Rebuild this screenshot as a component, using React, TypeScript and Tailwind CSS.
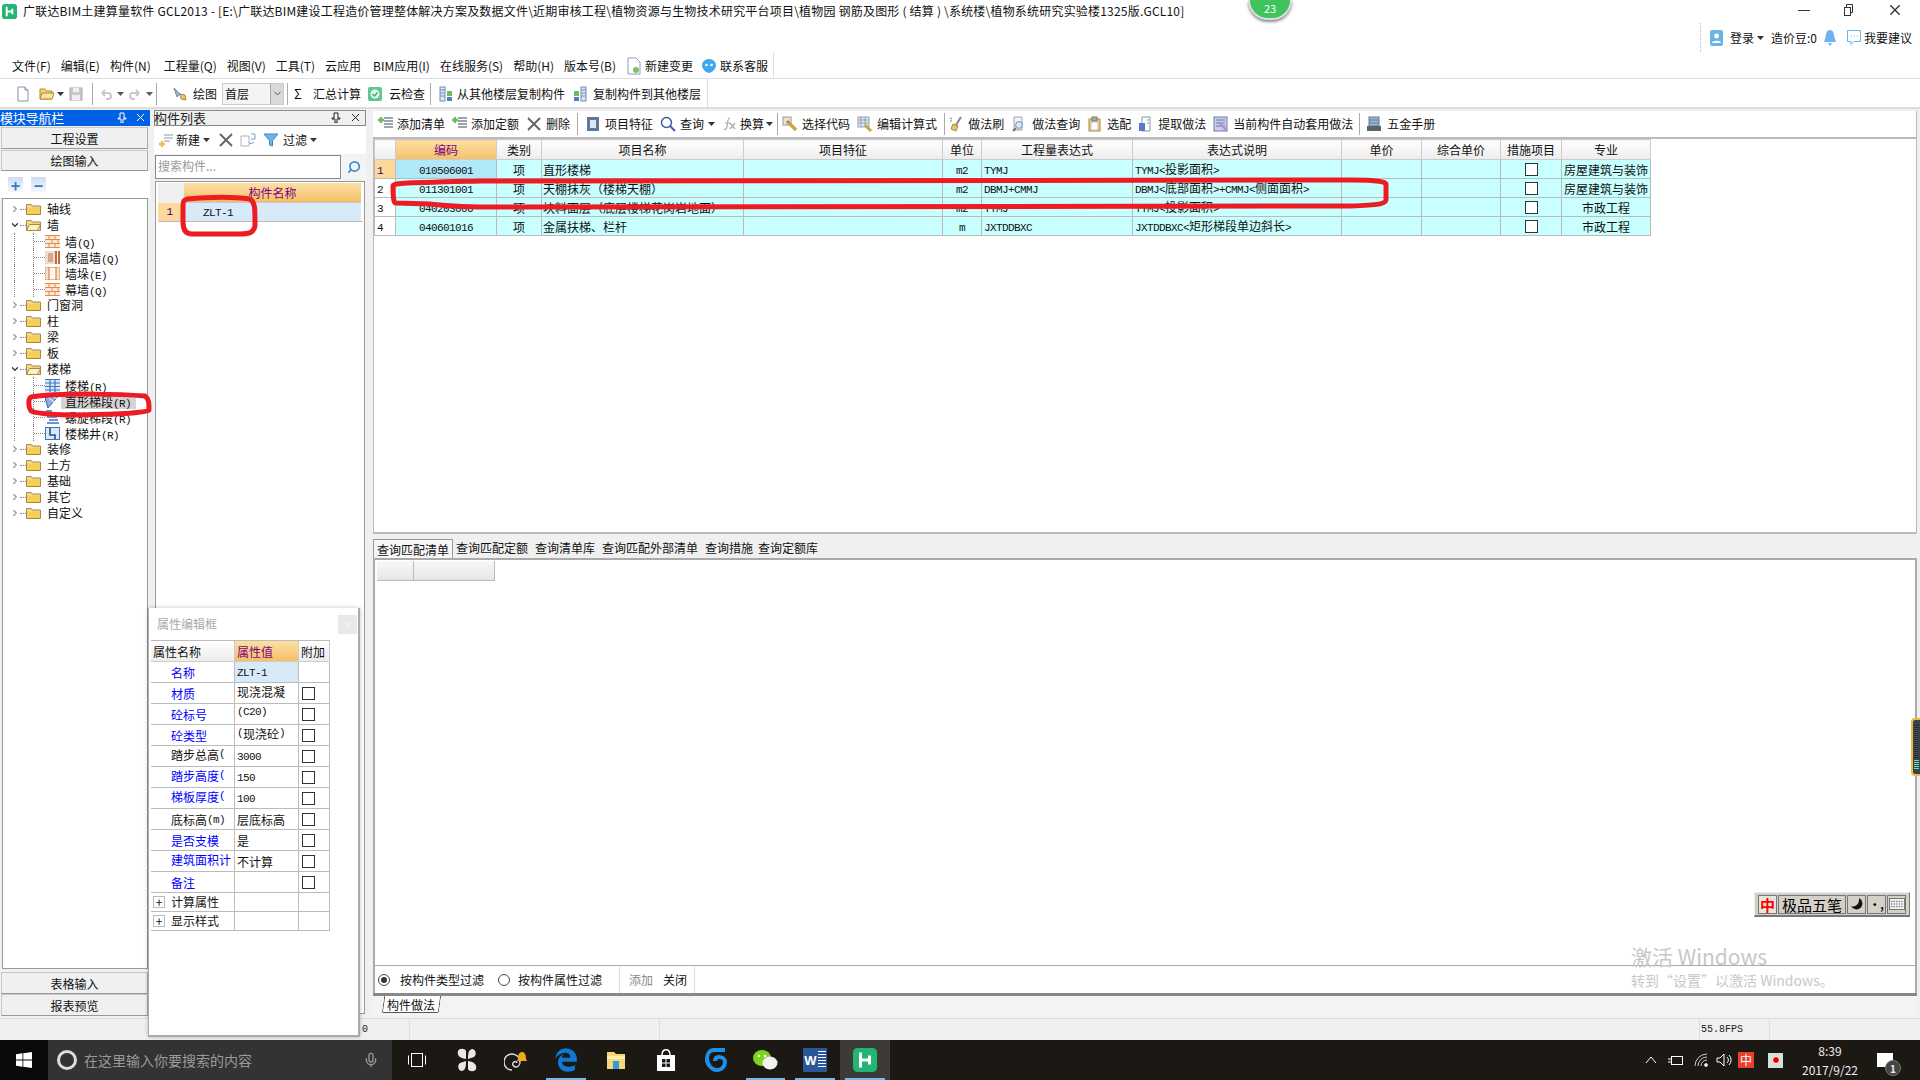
import type { ReactNode } from "react";
import { FaEdgeLegacy } from "react-icons/fa";
import { LuChevronDown, LuChevronRight, LuMic, LuSearch } from "react-icons/lu";

// splits ascii runs out so latin renders like the app's narrow monospaced font
const Sim = ({ text }: { text: string }) => (
  <>
    {text.split(/([\x00-\x7f]+)/).map((part, i) =>
      /^[\x00-\x7f]+$/.test(part) ? (
        <span key={i} className="font-['Liberation_Mono','Noto_Sans_CJK_SC',monospace] text-[11px] tracking-[-0.6px]">
          {part}
        </span>
      ) : (
        <span key={i}>{part}</span>
      )
    )}
  </>
);

const AppLogo = ({ size = 16 }: { size?: number }) => (
  <svg width={size} height={size} viewBox="0 0 16 16">
    <rect width="16" height="16" rx="3" fill="#22b573" />
    <path d="M5 3v10M5 8h6M11 5v6" stroke="#fff" strokeWidth="2" fill="none" />
  </svg>
);

const Arrow = () => (
  <svg width="7" height="4" viewBox="0 0 7 4" className="shrink-0">
    <path d="M0 0h7L3.5 4z" fill="#333" />
  </svg>
);

const Pin = () => (
  <svg width="10" height="11" viewBox="0 0 10 11">
    <path d="M3 1h4v5h2v1H6v4H4V7H1V6h2z" fill="none" stroke="currentColor" />
  </svg>
);

const Cross = ({ color = "currentColor", size = 9 }: { color?: string; size?: number }) => (
  <svg width={size} height={size} viewBox="0 0 9 9">
    <path d="M1 1l7 7M8 1L1 8" stroke={color} strokeWidth="1" fill="none" />
  </svg>
);

const Sep = () => <span className="block h-[22px] w-px bg-[#aaa] shrink-0" />;

/* toolbar icons */
const Page = () => (
  <svg width="16" height="16" viewBox="0 0 16 16">
    <path d="M3 1h7l3 3v11H3z" fill="#fff" stroke="#8a93a3" />
    <path d="M10 1v3h3" fill="#dde" stroke="#8a93a3" />
  </svg>
);
const OpenFolder = () => (
  <svg width="16" height="16" viewBox="0 0 16 16">
    <path d="M1 3h5l1 2h6v8H1z" fill="#f4d27a" stroke="#b08a33" />
    <path d="M1 13l2-6h12l-2 6z" fill="#fbe49f" stroke="#b08a33" />
  </svg>
);
const Disk = () => (
  <svg width="16" height="16" viewBox="0 0 16 16">
    <rect x="2" y="2" width="12" height="12" fill="#c9c9c9" stroke="#aaa" />
    <rect x="5" y="2" width="6" height="4" fill="#eee" />
    <rect x="4" y="9" width="8" height="5" fill="#eee" />
  </svg>
);
const Undo = ({ flip }: { flip?: boolean }) => (
  <svg width="14" height="14" viewBox="0 0 14 14" className={flip ? "-scale-x-100" : ""}>
    <path d="M3 6l3-3M3 6l3 3M3 6h6a3 3 0 0 1 0 6H7" stroke="#bbb" strokeWidth="2" fill="none" />
  </svg>
);
const Brush = () => (
  <svg width="16" height="16" viewBox="0 0 16 16">
    <path d="M2 2l6 6-3 3z" fill="#9db9dd" stroke="#6a8ab0" />
    <path d="M8 8l5 1 1 5-5-1z" fill="#e6c56a" stroke="#a88a3a" />
  </svg>
);
const CloudCheck = () => (
  <svg width="16" height="16" viewBox="0 0 16 16">
    <rect x="1" y="1" width="14" height="14" rx="2" fill="#5ec98c" />
    <circle cx="8" cy="8" r="4.5" fill="#e9f8ee" />
    <path d="M5.5 8l2 2 3-3.5" stroke="#3ca56b" strokeWidth="1.4" fill="none" />
  </svg>
);
const CopyFloor = ({ flip }: { flip?: boolean }) => (
  <svg width="16" height="16" viewBox="0 0 16 16">
    <rect x={flip ? 9 : 2} y="1" width="5" height="14" fill="#dbe6f3" stroke="#6d8fb8" />
    <path d={flip ? "M9 4h5M9 7h5M9 10h5" : "M2 4h5M2 7h5M2 10h5"} stroke="#6d8fb8" />
    <rect x={flip ? 2 : 9} y="5" width="5" height="5" fill="#6dbb5d" />
    <rect x={flip ? 2 : 9} y="11" width="5" height="4" fill="#4f7fb5" />
  </svg>
);
const AddSheet = ({ tint = "#6dbb5d" }: { tint?: string }) => (
  <svg width="16" height="16" viewBox="0 0 16 16">
    <path d="M6 2h9M6 5h9M6 8h9M6 11h9" stroke="#7a8794" strokeWidth="1.4" />
    <path d="M3 1v6M0 4h6" stroke={tint} strokeWidth="2.4" />
  </svg>
);
const BigX = () => (
  <svg width="16" height="16" viewBox="0 0 16 16">
    <path d="M2 2l12 12M14 2L2 14" stroke="#666" strokeWidth="2" />
  </svg>
);
const Feature = () => (
  <svg width="16" height="16" viewBox="0 0 16 16">
    <rect x="2" y="1" width="12" height="14" fill="#5d7a99" />
    <rect x="5" y="4" width="6" height="8" fill="#dfe7ef" />
  </svg>
);
const Lens = ({ color = "#3d55a5" }: { color?: string }) => (
  <svg width="16" height="16" viewBox="0 0 16 16">
    <circle cx="6.5" cy="6.5" r="5" fill="none" stroke={color} strokeWidth="1.4" />
    <path d="M10 10l5 5" stroke={color} strokeWidth="1.8" />
  </svg>
);
const Fx = () => (
  <svg width="16" height="16" viewBox="0 0 16 16">
    <path d="M8 2C5 2 6 7 5 11c-.4 2-2 3-3 2M3 7h5M8 7l5 6M13 7l-5 6" stroke="#aaa" fill="none" strokeWidth="1.2" />
  </svg>
);
const Pencils = () => (
  <svg width="16" height="16" viewBox="0 0 16 16">
    <rect x="1" y="1" width="8" height="8" fill="#e8e4d8" stroke="#999" />
    <path d="M5 5l9 9" stroke="#c9a34a" strokeWidth="3.4" />
    <path d="M5 5l2 1-1 1z" fill="#c33" />
  </svg>
);
const Sheet = () => (
  <svg width="16" height="16" viewBox="0 0 16 16">
    <rect x="1" y="1" width="11" height="10" fill="#e3eaf2" stroke="#8ea0b5" />
    <path d="M1 4h11M1 7h11M4 1v10M8 1v10" stroke="#8ea0b5" />
    <path d="M8 9l6 6" stroke="#c9a34a" strokeWidth="3" />
  </svg>
);
const SweepBrush = () => (
  <svg width="16" height="16" viewBox="0 0 16 16">
    <path d="M12 1L7 9" stroke="#888" strokeWidth="2" />
    <path d="M4 8l5 2-2 5-5-2z" fill="#e6c56a" stroke="#a88a3a" />
    <path d="M1 2l2 1M1 5h2" stroke="#777" />
  </svg>
);
const DocLens = () => (
  <svg width="16" height="16" viewBox="0 0 16 16">
    <path d="M3 1h8v13H3z" fill="#f2f2f2" stroke="#9aa3ad" />
    <circle cx="8" cy="9" r="3.4" fill="#dbe8f6" stroke="#6d8fb8" />
    <path d="M5 12l-3 3" stroke="#777" strokeWidth="2" />
  </svg>
);
const Clip = () => (
  <svg width="16" height="16" viewBox="0 0 16 16">
    <rect x="2" y="3" width="11" height="12" fill="#f0d48b" stroke="#a8893a" />
    <rect x="5" y="1" width="5" height="4" fill="#aaa" stroke="#777" />
    <rect x="4" y="6" width="7" height="8" fill="#fff" stroke="#bbb" />
  </svg>
);
const Extract = () => (
  <svg width="16" height="16" viewBox="0 0 16 16">
    <path d="M4 1h8v14H4z" fill="#fff" stroke="#8a93a3" />
    <rect x="1" y="7" width="6" height="8" fill="#5a78c8" />
    <path d="M9 4h2M9 7h2" stroke="#8a93a3" />
  </svg>
);
const AutoDo = () => (
  <svg width="16" height="16" viewBox="0 0 16 16">
    <rect x="1" y="1" width="13" height="14" fill="#c6cfe8" stroke="#6a7cb0" />
    <path d="M3 4h9M3 7h9M3 10h9" stroke="#6a7cb0" />
    <path d="M6 6l8 9" stroke="#b58fd0" strokeWidth="2.4" />
  </svg>
);
const Handbook = () => (
  <svg width="16" height="16" viewBox="0 0 16 16">
    <rect x="3" y="1" width="10" height="9" fill="#9fb6d2" stroke="#5d7a99" />
    <path d="M3 4h10M3 7h10" stroke="#5d7a99" />
    <rect x="1" y="10" width="14" height="5" fill="#566" />
  </svg>
);
const NewChange = () => (
  <svg width="16" height="18" viewBox="0 0 16 18">
    <path d="M2 1h8l4 4v12H2z" fill="#fff" stroke="#8aa0c8" />
    <circle cx="10" cy="13" r="3" fill="#7cc36a" />
  </svg>
);
const Service = () => (
  <svg width="16" height="16" viewBox="0 0 16 16">
    <path d="M8 1a7 6.4 0 0 1 7 6.4c0 3-3 6.6-7 7.6-4-1-7-4.600-7-7.600A7 6.400 0 0 1 8 1z" fill="#3fa8ee" />
    <circle cx="5.500" cy="7" r="1.300" fill="#fff" />
    <circle cx="10.500" cy="7" r="1.300" fill="#fff" />
  </svg>
);

const Tool = ({ icon, text, gap = "gap-[3px]", tail }: { icon: ReactNode; text: string; gap?: string; tail?: boolean }) => (
  <div className={`flex items-center shrink-0 ${gap}`}>
    {icon}
    <span className="whitespace-nowrap">{text}</span>
    {tail && <Arrow />}
  </div>
);

const MenuBar = () => (
  <div className="flex h-[27px] shrink-0">
    <div className="flex items-center gap-[10px] w-[774px] pl-[12px] pt-[2px] text-[12px] border-r border-b border-[#ddd] text-[#111]">
      <span>文件(F)</span>
      <span>编辑(E)</span>
      <span>构件(N)</span>
      <span className="ml-[3px]">工程量(Q)</span>
      <span>视图(V)</span>
      <span>工具(T)</span>
      <span>云应用</span>
      <span className="ml-[2px]">BIM应用(I)</span>
      <span>在线服务(S)</span>
      <span>帮助(H)</span>
      <span>版本号(B)</span>
      <Tool icon={<NewChange />} text="新建变更" />
      <span className="-ml-[2px]">
        <Tool icon={<Service />} text="联系客服" />
      </span>
    </div>
    <div className="flex-1 border-b border-[#ddd]" />
  </div>
);

const ToolBar = () => (
  <div className="flex items-center h-[30px] shrink-0 border-b-2 border-[#ddd] text-[12px] text-[#111]">
    <div className="flex items-center w-[708px] h-full border-r border-[#ddd] pl-[15px] pt-[1px]">
      <Page />
      <span className="ml-[8px] flex items-center gap-[2px]">
        <OpenFolder />
        <Arrow />
      </span>
      <span className="ml-[4px]">
        <Disk />
      </span>
      <span className="ml-[8px]">
        <Sep />
      </span>
      <span className="ml-[6px] flex items-center gap-[4px] opacity-80">
        <Undo />
        <Arrow />
      </span>
      <span className="ml-[4px] flex items-center gap-[4px] opacity-80">
        <Undo flip />
        <Arrow />
      </span>
      <span className="ml-[3px] mr-[15px]">
        <Sep />
      </span>
      <Tool icon={<Brush />} text="绘图" gap="gap-[5px]" />
      <div className="flex items-center justify-between ml-[5px] w-[62px] h-[22px] pl-[2px] bg-[#f4f4f4] border border-[#ccc]">
        <span>首层</span>
        <span className="flex items-center justify-center w-[13px] h-full bg-[#d9d9d9] border-l border-[#aaa]">
          <LuChevronDown size={11} color="#444" />
        </span>
      </div>
      <span className="ml-[3px]">
        <Sep />
      </span>
      <span className="ml-[6px] mr-[12px] w-[7px] text-[13px]">Σ</span>
      <span>汇总计算</span>
      <span className="ml-[6px]">
        <Tool icon={<CloudCheck />} text="云检查" gap="gap-[6px]" />
      </span>
      <span className="ml-[5px] mr-[7px]">
        <Sep />
      </span>
      <Tool icon={<CopyFloor />} text="从其他楼层复制构件" />
      <span className="ml-[7px]">
        <Tool icon={<CopyFloor flip />} text="复制构件到其他楼层" gap="gap-[5px]" />
      </span>
    </div>
  </div>
);

const Folder = ({ open }: { open?: boolean }) => (
  <svg width="15" height="12" viewBox="0 0 15 12" className="shrink-0">
    <path d="M.5 1.500h5l1 1.500h8v8.500H.5z" fill="#f5d67e" stroke="#a08a50" />
    {open ? (
      <path d="M.5 11.500l3-6h11l-3 6z" fill="#fdf0bd" stroke="#a08a50" />
    ) : (
      <path d="M1 5h13v6H1z" fill="#f8cf55" />
    )}
  </svg>
);

const Brick = () => (
  <svg width="15" height="13" viewBox="0 0 15 13" className="shrink-0">
    <rect width="15" height="13" fill="#fbeadb" />
    <path d="M0 .5h15M0 4.500h15M0 8.500h15M0 12.500h15M4 .5v4M10 .5v4M7 4.500v4M13 4.500v4M4 8.500v4M10 8.500v4" stroke="#e88a4a" fill="none" />
  </svg>
);
const BrickInsul = () => (
  <svg width="15" height="13" viewBox="0 0 15 13" className="shrink-0">
    <rect width="10" height="13" fill="#eedccd" />
    <rect x="3" y="2" width="5" height="9" fill="#d9a88c" />
    <path d="M11 0v13M14 0v13" stroke="#c4683a" strokeWidth="2" />
  </svg>
);
const Pier = () => (
  <svg width="15" height="13" viewBox="0 0 15 13" className="shrink-0">
    <rect width="15" height="13" fill="#fbe0c8" stroke="#e88a4a" />
    <rect x="4" y="0" width="7" height="13" fill="#fff6ec" stroke="#d0703a" />
  </svg>
);
const Stair = () => (
  <svg width="15" height="13" viewBox="0 0 15 13" className="shrink-0">
    <rect width="15" height="13" fill="#dbe8f8" />
    <path d="M0 .5h15M0 4h15M0 7.500h15M0 11h15M5 0v13M10 0v13" stroke="#3e74c0" strokeWidth="1.200" />
  </svg>
);
const StraightRun = () => (
  <svg width="15" height="14" viewBox="0 0 15 14" className="shrink-0">
    <path d="M0 4l9-4h6L3 14z" fill="#8fb0de" stroke="#2f5fa8" />
    <path d="M4 4l5 4M7 2l5 3" stroke="#fff" />
  </svg>
);
const Spiral = () => (
  <svg width="15" height="14" viewBox="0 0 15 14" className="shrink-0">
    <path d="M1 1h6M4 4h8M2 7h10M4 10h9M2 13h12" stroke="#3e74c0" strokeWidth="1.400" />
  </svg>
);
const Shaft = () => (
  <svg width="15" height="13" viewBox="0 0 15 13" className="shrink-0">
    <rect x=".5" y=".5" width="14" height="12" fill="#dbe8f8" stroke="#3e74c0" />
    <path d="M5 1v7h5V12" stroke="#1f4f98" strokeWidth="1.600" fill="none" />
  </svg>
);

const TopNode = ({ label, open }: { label: string; open?: boolean }) => (
  <div className="flex items-center h-4 pl-[7px]">
    {open ? <LuChevronDown size={10} color="#333" strokeWidth={3} /> : <LuChevronRight size={10} color="#999" strokeWidth={3} />}
    <span className="w-[6px] border-t border-dotted border-[#888]" />
    <Folder open={open} />
    <span className="ml-[6px]">{label}</span>
  </div>
);

const ChildNode = ({ icon, label, selected }: { icon: ReactNode; label: string; selected?: boolean }) => (
  <div className="flex h-4 ml-[11px] border-l border-dotted border-[#888]">
    <div className="flex items-center ml-[18px] border-l border-dotted border-[#888]">
      <span className="w-[11px] border-t border-dotted border-[#888]" />
      {icon}
      <span className={`ml-[1px] pl-[4px] h-[15px] leading-[15px] w-[75px] whitespace-nowrap ${selected ? "bg-[#d3d3d3]" : ""}`}>
        <Sim text={label} />
      </span>
    </div>
  </div>
);

const NavBtn = ({ label, h = "h-[22px]" }: { label: string; h?: string }) => (
  <div className={`flex items-center justify-center pt-px mx-[1px] w-[147px] bg-[#f0f0f0] border border-[#c8c8c8] border-b-[#999] border-r-[#aaa] text-[12px] text-[#111] ${h}`}>
    {label}
  </div>
);

const NavPanel = () => (
  <aside className="flex flex-col w-[150px] shrink-0 h-full">
    <div className="flex items-center h-[16px] mt-[1px] pb-px bg-[#0060e6] text-white text-[13px] leading-none pr-[5px]">
      <span className="tracking-[-0.2px]">模块导航栏</span>
      <span className="ml-auto mr-[9px]">
        <Pin />
      </span>
      <Cross />
    </div>
    <div className="mt-[1px]">
      <NavBtn label="工程设置" />
    </div>
    <div className="mt-px">
      <NavBtn label="绘图输入" h="h-[21px]" />
    </div>
    <div className="flex items-center gap-[8px] h-[27px] pl-[8px] bg-white">
      <span className="flex items-center justify-center w-[15px] h-[15px] bg-linear-to-b from-[#cfdcf0] to-[#f4f7fb] text-[#2f7fd0] text-[16px] font-bold leading-none">+</span>
      <span className="flex items-center justify-center w-[15px] h-[15px] bg-linear-to-b from-[#cfdcf0] to-[#f4f7fb] text-[#2f7fd0] text-[16px] font-bold leading-none">−</span>
    </div>
    <div className="h-[771px] ml-[2px] w-[146px] bg-white border border-[#999] pt-[2px] text-[12px] text-[#111] overflow-hidden">
      <TopNode label="轴线" />
      <TopNode label="墙" open />
      <ChildNode icon={<Brick />} label="墙(Q)" />
      <ChildNode icon={<BrickInsul />} label="保温墙(Q)" />
      <ChildNode icon={<Pier />} label="墙垛(E)" />
      <ChildNode icon={<Brick />} label="幕墙(Q)" />
      <TopNode label="门窗洞" />
      <TopNode label="柱" />
      <TopNode label="梁" />
      <TopNode label="板" />
      <TopNode label="楼梯" open />
      <ChildNode icon={<Stair />} label="楼梯(R)" />
      <ChildNode icon={<StraightRun />} label="直形梯段(R)" selected />
      <ChildNode icon={<Spiral />} label="螺旋梯段(R)" />
      <ChildNode icon={<Shaft />} label="楼梯井(R)" />
      <TopNode label="装修" />
      <TopNode label="土方" />
      <TopNode label="基础" />
      <TopNode label="其它" />
      <TopNode label="自定义" />
    </div>
    <div className="mt-[3px]">
      <NavBtn label="表格输入" />
    </div>
    <div className="mt-[0px]">
      <NavBtn label="报表预览" />
    </div>
  </aside>
);

const ComponentPanel = () => (
  <section className="flex flex-col w-[212px] ml-[4px] shrink-0 h-[905px]">
    <div className="flex items-center h-[16px] mt-[1px] pb-px bg-[#f0f0f0] border border-[#888] text-[13px] leading-none text-[#222] pr-[5px]">
      <span className="-ml-px">构件列表</span>
      <span className="ml-auto mr-[10px]">
        <Pin />
      </span>
      <Cross />
    </div>
    <div className="flex items-center h-[28px] pl-[5px] text-[12px] text-[#111] bg-white">
      <svg width="14" height="14" viewBox="0 0 14 14">
        <path d="M5 2h9M5 5h9M5 8h6" stroke="#8a95a5" strokeWidth="1.200" />
        <path d="M3 8v6M0 11h6" stroke="#e6c14e" strokeWidth="2.400" />
      </svg>
      <span className="ml-[3px]">新建</span>
      <span className="ml-[3px]">
        <Arrow />
      </span>
      <span className="ml-[8px]">
        <BigX />
      </span>
      <svg width="16" height="14" viewBox="0 0 16 14" className="ml-[6px]">
        <path d="M1 3h8v10H1z" fill="#fff" stroke="#aab4c2" />
        <path d="M11 1h4v5h-4M9 9l2 2 3-2" stroke="#7a9ccc" fill="none" />
      </svg>
      <svg width="14" height="14" viewBox="0 0 14 14" className="ml-[8px]">
        <path d="M0 1h14L8.500 7.500V13l-3-1V7.500z" fill="#6db3e8" stroke="#3a86c0" />
      </svg>
      <span className="ml-[5px]">过滤</span>
      <span className="ml-[3px]">
        <Arrow />
      </span>
    </div>
    <div className="flex items-center h-[24px] mt-px">
      <div className="flex items-center h-full w-[186px] ml-px border border-[#888] pl-[2px] pb-[3px] text-[12px] text-[#999] bg-white">搜索构件...</div>
      <div className="flex items-center justify-center flex-1 h-full bg-[#f4f4f4]">
        <LuSearch size={14} color="#3a8fd8" strokeWidth={3} className="-scale-x-100" />
      </div>
    </div>
    <div className="flex-1 mt-[2px] ml-px mr-[1px] bg-white border border-[#999] p-[1px] text-[12px]">
      <div className="flex h-[20px] ml-[1px]">
        <div className="w-[26px] bg-[#efefef]" />
        <div className="flex-1 mr-[2px] flex items-center justify-center bg-linear-to-b from-[#fbdfa6] to-[#f4c163] text-[#800080] border-b border-[#c8c8c8]">
          构件名称
        </div>
      </div>
      <div className="flex h-[19px] ml-[1px] border-b border-[#bbb]">
        <div className="w-[26px] flex items-center justify-center pr-[3px] pt-px bg-[#fdd89a] text-[#300060]">
          <Sim text="1" />
        </div>
        <div className="flex-1 mr-[2px] flex items-center pl-[19px] pt-[2px] bg-[#d8e9f8] text-[#111]">
          <Sim text="ZLT-1" />
        </div>
      </div>
    </div>
  </section>
);

const MainToolbar = () => (
  <div className="flex items-center gap-[7px] h-[26px] mt-[2px] pl-[5px] text-[12px] text-[#111] bg-white border-r border-[#bbb] shrink-0">
    <Tool icon={<AddSheet />} text="添加清单" />
    <Tool icon={<AddSheet />} text="添加定额" />
    <Tool icon={<BigX />} text="删除" gap="gap-[4px]" />
    <Sep />
    <Tool icon={<Feature />} text="项目特征" gap="gap-[4px]" />
    <Tool icon={<Lens />} text="查询" gap="gap-[4px]" tail />
    <Tool icon={<Fx />} text="换算" gap="gap-[2px]" tail />
    <span className="-mx-[3px]">
      <Sep />
    </span>
    <Tool icon={<Pencils />} text="选择代码" gap="gap-[4px]" />
    <Tool icon={<Sheet />} text="编辑计算式" gap="gap-[4px]" />
    <span className="-mr-[3px]">
      <Sep />
    </span>
    <Tool icon={<SweepBrush />} text="做法刷" gap="gap-[3px]" />
    <Tool icon={<DocLens />} text="做法查询" gap="gap-[5px]" />
    <Tool icon={<Clip />} text="选配" gap="gap-[4px]" />
    <Tool icon={<Extract />} text="提取做法" gap="gap-[4px]" />
    <Tool icon={<AutoDo />} text="当前构件自动套用做法" gap="gap-[4px]" />
    <span className="-mx-[1px]">
      <Sep />
    </span>
    <Tool icon={<Handbook />} text="五金手册" gap="gap-[5px]" />
  </div>
);

const columns = [
  { label: "", w: "w-[21px]" },
  { label: "编码", w: "w-[101px]" },
  { label: "类别", w: "w-[45px]" },
  { label: "项目名称", w: "w-[202px]" },
  { label: "项目特征", w: "w-[199px]" },
  { label: "单位", w: "w-[39px]" },
  { label: "工程量表达式", w: "w-[151px]" },
  { label: "表达式说明", w: "w-[209px]" },
  { label: "单价", w: "w-[80px]" },
  { label: "综合单价", w: "w-[79px]" },
  { label: "措施项目", w: "w-[61px]" },
  { label: "专业", w: "w-[89px]" },
];

const rows = [
  ["1", "010506001", "项", "直形楼梯", "", "m2", "TYMJ", "TYMJ<投影面积>", "房屋建筑与装饰"],
  ["2", "011301001", "项", "天棚抹灰（楼梯天棚）", "", "m2", "DBMJ+CMMJ", "DBMJ<底部面积>+CMMJ<侧面面积>", "房屋建筑与装饰"],
  ["3", "040203006", "项", "块料面层（底层楼梯花岗岩地面）", "", "m2", "TYMJ", "TYMJ<投影面积>", "市政工程"],
  ["4", "040601016", "项", "金属扶梯、栏杆", "", "m", "JXTDDBXC", "JXTDDBXC<矩形梯段单边斜长>", "市政工程"],
];

const Check = () => <span className="block w-[13px] h-[13px] border border-[#333] bg-white" />;

const BillGrid = () => (
  <div className="h-[397px] shrink-0 bg-white border-y-2 border-l border-r border-[#bbb] overflow-hidden">
    <table className="table-fixed border-collapse text-[12px] text-[#111] w-[1276px]">
      <colgroup>
        {columns.map((c) => (
          <col key={c.label} className={c.w} />
        ))}
      </colgroup>
      <thead>
        <tr className="h-[20px]">
          {columns.map((c, i) => (
            <th
              key={c.label}
              className={`font-normal border border-[#ccc] ${
                i === 1 ? "bg-linear-to-b from-[#fbdfa6] to-[#f4c163] text-[#800080]" : "bg-linear-to-b from-white to-[#ececec]"
              }`}
            >
              {c.label}
            </th>
          ))}
        </tr>
      </thead>
      <tbody>
        {rows.map((r, i) => (
          <tr key={r[0]} className="h-[19px] leading-none">
            <td className={`border border-[#bbb] pl-[2px] pt-px ${i === 0 ? "bg-[#fdd89a] text-[#300060]" : "bg-white"}`}>
              <Sim text={r[0]} />
            </td>
            <td className={`border border-[#bbb] text-center pt-px ${i === 0 ? "bg-[#b0e8f8]" : "bg-[#c8ffff]"}`}>
              <Sim text={r[1]} />
            </td>
            <td className="border border-[#bbb] text-center pt-px bg-[#c8ffff]">{r[2]}</td>
            <td className="border border-[#bbb] pl-[1px] pt-px bg-[#c8ffff] whitespace-nowrap overflow-hidden">{r[3]}</td>
            <td className="border border-[#bbb] bg-[#c8ffff]">{r[4]}</td>
            <td className="border border-[#bbb] text-center pt-px bg-[#c8ffff]">
              <Sim text={r[5]} />
            </td>
            <td className="border border-[#bbb] pl-[2px] pt-px bg-[#c8ffff]">
              <Sim text={r[6]} />
            </td>
            <td className="border border-[#bbb] pl-[2px] pt-px bg-[#c8ffff] whitespace-nowrap overflow-hidden">
              <Sim text={r[7]} />
            </td>
            <td className="border border-[#bbb] bg-[#c8ffff]" />
            <td className="border border-[#bbb] bg-[#c8ffff]" />
            <td className="border border-[#bbb] bg-[#c8ffff]">
              <span className="flex justify-center">
                <Check />
              </span>
            </td>
            <td className="border border-[#bbb] text-center pt-px bg-[#c8ffff] whitespace-nowrap overflow-hidden">{r[8]}</td>
          </tr>
        ))}
      </tbody>
    </table>
  </div>
);

const QueryTabs = () => (
  <div className="flex items-end h-[26px] bg-[#f0f0f0] text-[12px] text-[#111] shrink-0 border-b-2 border-[#aaa]">
    <span className="flex items-center justify-center h-[19px] pt-px w-[80px] bg-[#f7f7f7] border border-b-0 border-[#999]">查询匹配清单</span>
    <div className="flex h-[22px] pt-px items-center">
      <span className="ml-[3px]">查询匹配定额</span>
      <span className="ml-[7px]">查询清单库</span>
      <span className="ml-[7px]">查询匹配外部清单</span>
      <span className="ml-[7px]">查询措施</span>
      <span className="ml-[5px]">查询定额库</span>
    </div>
  </div>
);

const QueryPane = () => (
  <div className="relative h-[405px] shrink-0 bg-white border-l-2 border-r-2 border-[#aaa] pl-[2px] pt-[1px]">
    <div className="flex h-[20px]">
      <div className="w-[37px] bg-linear-to-b from-[#f8f8f8] to-[#e6e6e6] border-r border-b border-[#bbb]" />
      <div className="w-[81px] bg-linear-to-b from-[#f8f8f8] to-[#e6e6e6] border-r border-b border-[#bbb]" />
    </div>
    <div className="absolute right-[-5px] top-[158px] flex flex-col items-center gap-[2px] w-[9px] h-[58px] py-[5px] rounded-l-[4px] bg-[#3a4250] border-l-2 border-y-2 border-[#f0b840]">
      <span className="w-[5px] h-[38px] bg-[repeating-linear-gradient(to_bottom,#252b35_0,#252b35_1px,#4a5260_1px,#4a5260_2px)]" />
      <span className="w-[5px] h-[10px] bg-[repeating-linear-gradient(to_bottom,#5ce6b0_0,#5ce6b0_1px,#3a4250_1px,#3a4250_2px)]" />
    </div>
  </div>
);

const Radio = ({ on }: { on?: boolean }) => (
  <span className="flex items-center justify-center w-[12px] h-[12px] rounded-full border border-[#444] bg-white">
    {on && <span className="w-[6px] h-[6px] rounded-full bg-[#333]" />}
  </span>
);

const FilterBar = () => (
  <div className="flex items-center h-[28px] shrink-0 pl-[3px] bg-white text-[12px] text-[#111] border-l-2 border-r-2 border-t border-[#aaa]">
    <Radio on />
    <span className="ml-[10px]">按构件类型过滤</span>
    <span className="ml-[14px]">
      <Radio />
    </span>
    <span className="ml-[8px]">按构件属性过滤</span>
    <span className="ml-[17px] h-full w-px bg-[#ddd]" />
    <span className="ml-[9px] text-[#888]">添加</span>
    <span className="ml-[10px]">关闭</span>
    <span className="ml-[7px] h-full w-px bg-[#ddd]" />
  </div>
);

const BottomStrip = () => (
  <div className="flex-1 border-t-[3px] border-[#888] bg-[#f3f3f3] pl-[10px] text-[12px] text-[#111]">
    <span className="flex items-center justify-center w-[57px] h-[17px] pt-px bg-white border-x border-b border-[#555] rounded-b-[2px] -skew-x-[8deg]">
      <span className="skew-x-[8deg]">构件做法</span>
    </span>
  </div>
);

const StatusBar = () => (
  <div className="flex items-center h-[22px] shrink-0 bg-[#f0f0f0] border-t border-[#ddd] text-[12px] text-[#222]">
    <span className="w-[410px] h-full border-r border-[#ddd] pl-[362px] flex items-center font-['Liberation_Mono',monospace] text-[10px]">0</span>
    <span className="w-[250px] h-full border-r border-[#ddd]" />
    <span className="w-[1040px] h-full border-r border-[#ddd]" />
    <span className="w-[70px] h-full border-r border-[#ddd] pl-[1px] flex items-center font-['Liberation_Mono',monospace] text-[10px]">55.8FPS</span>
  </div>
);

type Prop = { name: string; blue?: boolean; value: string; check?: boolean; valueTop?: boolean };
const props: Prop[] = [
  { name: "名称", blue: true, value: "ZLT-1" },
  { name: "材质", blue: true, value: "现浇混凝", check: true, valueTop: true },
  { name: "砼标号", blue: true, value: "(C20)", check: true, valueTop: true },
  { name: "砼类型", blue: true, value: "(现浇砼)", check: true, valueTop: true },
  { name: "踏步总高(", value: "3000", check: true },
  { name: "踏步高度(", blue: true, value: "150", check: true },
  { name: "梯板厚度(", blue: true, value: "100", check: true },
  { name: "底标高(m)", value: "层底标高", check: true },
  { name: "是否支模", blue: true, value: "是", check: true },
  { name: "建筑面积计", blue: true, value: "不计算", check: true },
  { name: "备注", blue: true, value: "", check: true },
];

const PropertyDialog = () => (
  <div className="absolute left-[148px] top-[608px] w-[212px] h-[429px] bg-white border-r-2 border-b-2 border-l border-[#aaa] shadow-[0_0_4px_rgba(0,0,0,0.25)] text-[12px] z-10">
    <div className="flex items-center h-[32px] pl-[8px] text-[#aaa]">
      <span>属性编辑框</span>
      <span className="ml-auto mr-[1px] flex items-center justify-center w-[19px] h-[19px] bg-[#e9e9e9]">
        <Cross color="#fff" size={7} />
      </span>
    </div>
    <div className="w-[179px] ml-[2px] border-t border-[#bbb] text-[#111]">
      <div className="flex h-[21px] pt-0">
        <div className="w-[84px] flex items-center pl-[2px] pt-px border-r border-b border-[#ccc] bg-linear-to-b from-white to-[#ececec]">属性名称</div>
        <div className="w-[64px] flex items-center pl-[2px] pt-px border-r border-b border-[#ccc] bg-linear-to-b from-[#fbdfa6] to-[#f4c163] text-[#800080]">属性值</div>
        <div className="w-[31px] flex items-center pl-[2px] pt-px border-r border-b border-[#ccc] bg-linear-to-b from-white to-[#ececec]">附加</div>
      </div>
      {props.map((p, i) => (
        <div key={p.name} className="flex h-[21px]">
          <div className={`w-[84px] flex ${p.name.endsWith("(") || p.name === "建筑面积计" ? "items-start" : "items-center pt-[2px]"} pl-[20px] border-r border-b border-[#bbb] whitespace-nowrap overflow-hidden ${p.blue ? "text-[#0000ff]" : "text-[#111]"}`}>
            <Sim text={p.name} />
          </div>
          <div className={`w-[64px] flex ${p.valueTop ? "items-start" : "items-center pt-[2px]"} pl-[2px] border-r border-b border-[#bbb] whitespace-nowrap overflow-hidden ${i === 0 ? "bg-[#d8e9f8]" : ""}`}>
            <Sim text={p.value} />
          </div>
          <div className="w-[31px] flex items-center pl-[3px] border-r border-b border-[#bbb]">{p.check && <Check />}</div>
        </div>
      ))}
      {["计算属性", "显示样式"].map((name) => (
        <div key={name} className="flex h-[19px]">
          <div className="w-[84px] flex items-center pl-[2px] border-r border-b border-[#bbb]">
            <span className="flex items-center justify-center w-[12px] h-[12px] border border-[#bbb] leading-none text-[12px]">+</span>
            <span className="ml-[6px]">{name}</span>
          </div>
          <div className="w-[64px] border-r border-b border-[#bbb]" />
          <div className="w-[31px] border-r border-b border-[#bbb]" />
        </div>
      ))}
    </div>
  </div>
);

const RedMarks = () => (
  <svg className="absolute inset-0 z-20 pointer-events-none" width="1920" height="1080" fill="none" stroke="#ed1c24" strokeWidth="5" strokeLinejoin="round">
    <path d="M187 199C210 197 235 197 250 199C255 202 255 206 255 226C254 232 250 234 240 234L192 234C186 234 183 230 183 222L183 206C183 201 184 200 187 199z" />
    <path d="M38 396C70 393 120 394 145 396C149 399 149 403 149 410C146 413 120 414 80 415C55 415 38 414 31 411C28 406 28 399 31 397z" />
    <path d="M393 186C393 183 400 183 480 181C600 179 900 178 1350 180C1380 180 1385 182 1386 184L1386 200C1385 204 1380 205 1350 206C1200 207 900 207 500 207C450 207 440 205 430 204L396 203C394 203 393 200 393 186z" />
  </svg>
);

const Watermark = () => (
  <div className="absolute left-[1631px] top-[946px] z-10 text-[#c8c8c8] pointer-events-none leading-none">
    <div className="text-[21px]">激活 Windows</div>
    <div className="mt-[6px] text-[14px]">转到“设置”以激活 Windows。</div>
  </div>
);

const ImeBar = () => (
  <div className="absolute left-[1754px] top-[892px] z-10 flex items-center gap-px h-[25px] px-[3px] bg-[#d4d0c8] border border-[#777] border-t-[#eee] border-l-[#eee] border-b-2 text-[#000]">
    <span className="flex items-center justify-center w-[19px] h-[19px] bg-[#e8e4dc] border border-[#777] text-[#f00] text-[15px] font-bold leading-none">中</span>
    <span className="flex items-center h-[19px] px-[3px] bg-[#d4d0c8] border border-[#777] text-[15px] leading-none whitespace-nowrap">极品五笔</span>
    <span className="flex items-center justify-center w-[19px] h-[19px] border border-[#777]">
      <svg width="12" height="12" viewBox="0 0 12 12">
        <path d="M8 0a6 6 0 1 1-8 8c4 2 9-2 8-8z" fill="#111" />
      </svg>
    </span>
    <span className="flex items-center justify-center w-[19px] h-[19px] border border-[#777] text-[11px] leading-none font-bold">·,</span>
    <span className="flex items-center justify-center w-[19px] h-[19px] border border-[#777]">
      <svg width="16" height="12" viewBox="0 0 16 12">
        <rect x=".5" y=".5" width="15" height="11" fill="#eee" stroke="#777" />
        <path d="M2 3.500h12M2 6h12M2 8.500h12" stroke="#777" strokeDasharray="1.500 1" />
      </svg>
    </span>
  </div>
);

const TaskIcon = ({ children, active, bar }: { children: ReactNode; active?: boolean; bar?: boolean }) => (
  <div className={`relative flex items-center justify-center w-[49.8px] h-full shrink-0 ${active ? "bg-[#3d3b38]" : ""}`}>
    {children}
    {bar && <span className="absolute bottom-0 left-[5px] right-[5px] h-[2px] bg-[#76b9ed]" />}
  </div>
);

const TaskBar = () => (
  <div className="flex items-center h-[40px] shrink-0 bg-[#1c1814] text-white">
    <div className="flex items-center justify-center w-[48px] h-full bg-[#0a0a0a]">
      <svg width="16" height="16" viewBox="0 0 16 16" fill="#fff">
        <path d="M0 2.200l6.500-.9v6.300H0zM7.300 1.200L16 0v7.600H7.300zM0 8.400h6.500v6.300L0 13.800zM7.300 8.400H16V16l-8.700-1.200z" />
      </svg>
    </div>
    <div className="flex items-center w-[344px] h-full bg-[#333] pl-[9px] text-[14px] text-[#9a9a9a]">
      <span className="w-[20px] h-[20px] rounded-full border-[3px] border-[#ddd]" />
      <span className="ml-[7px]">在这里输入你要搜索的内容</span>
      <LuMic size={16} color="#999" className="ml-auto mr-[13px]" />
    </div>
    <div className="flex items-center h-full">
      <TaskIcon>
        <svg width="20" height="16" viewBox="0 0 20 16" fill="none" stroke="#fff">
          <rect x="4.500" y="1.500" width="11" height="13" />
          <path d="M1.500 3.500v9M18.500 3.500v9" />
        </svg>
      </TaskIcon>
      <TaskIcon>
        <svg width="22" height="24" viewBox="0 0 22 24" fill="#e8e8e8">
          <path d="M10 11C3 10 1 7 2 3c1-3 7-3 8 0zM12 11c0-7 1-9 4-10 4 0 5 6 2 8zM12 13c7 1 9 4 8 8-1 3-7 3-8 0zM10 13c0 7-1 9-4 10-4 0-5-6-2-8z" />
        </svg>
      </TaskIcon>
      <TaskIcon>
        <svg width="24" height="24" viewBox="0 0 24 24" fill="none">
          <path d="M8 22a8 8 0 1 1 8-8c0 3-2 5-4 5s-4-2-3-4 4-2 4 0" stroke="#ddd" strokeWidth="1.400" />
          <path d="M14 11c0-4 1-7 4-7s4 3 4 7l1 2h-10z" fill="#f0a820" />
        </svg>
      </TaskIcon>
      <TaskIcon bar>
        <FaEdgeLegacy size={24} color="#0f78d4" />
      </TaskIcon>
      <TaskIcon>
        <svg width="22" height="20" viewBox="0 0 22 20">
          <path d="M2 2h7l2 2h9v15H2z" fill="#f7d774" />
          <path d="M2 6h18v3H2z" fill="#fdeeb0" />
          <rect x="8" y="11" width="6" height="8" fill="#2f9ae0" />
        </svg>
      </TaskIcon>
      <TaskIcon>
        <svg width="20" height="22" viewBox="0 0 20 22">
          <path d="M1 6h18v16H1z" fill="#fff" />
          <path d="M6 6c0-7 8-7 8 0" stroke="#fff" strokeWidth="1.400" fill="none" />
          <path d="M6 10h3.500v3.500H6zM10.500 10H14v3.500h-3.500zM6 14.500h3.500V18H6zM10.500 14.500H14V18h-3.500z" fill="#1c1814" />
        </svg>
      </TaskIcon>
      <TaskIcon>
        <svg width="22" height="24" viewBox="0 0 22 24" fill="none">
          <path d="M20 2H9C4 2 2 7 2 11c0 6 5 11 10 11s8-4 8-8c0-3-3-5-6-5s-4 2-4 4" stroke="#1e90e8" strokeWidth="4" />
        </svg>
      </TaskIcon>
      <TaskIcon bar>
        <svg width="26" height="22" viewBox="0 0 26 22">
          <ellipse cx="10" cy="9" rx="9" ry="8" fill="#7ed321" />
          <ellipse cx="18" cy="14" rx="7.500" ry="6.500" fill="#f2f2f2" />
          <circle cx="7" cy="7" r="1.200" fill="#fff" />
          <circle cx="13" cy="7" r="1.200" fill="#fff" />
        </svg>
      </TaskIcon>
      <TaskIcon bar>
        <span className="relative flex items-center w-[24px] h-[24px] bg-[#2b579a] text-white text-[13px] pl-[1px] font-['Liberation_Sans',sans-serif] font-bold leading-none">
          W
          <span className="absolute right-[1px] top-[3px] w-[8px] h-[18px] bg-[repeating-linear-gradient(to_bottom,#fff_0,#fff_1px,#2b579a_1px,#2b579a_3px)]" />
        </span>
      </TaskIcon>
      <TaskIcon active bar>
        <AppLogo size={24} />
      </TaskIcon>
    </div>
    <div className="flex items-center h-full ml-auto text-[#eee]">
      <svg width="12" height="8" viewBox="0 0 12 8" fill="none" stroke="#fff" className="mr-[11px]">
        <path d="M1 7l5-6 5 6" />
      </svg>
      <svg width="16" height="12" viewBox="0 0 16 12" fill="none" stroke="#fff" className="mr-[10px]">
        <rect x="3.500" y="2.500" width="11" height="8" />
        <path d="M0 5h4M0 8h4" />
      </svg>
      <svg width="14" height="14" viewBox="0 0 14 14" fill="none" stroke="#ccc" className="mr-[8px]">
        <path d="M1 13A12 12 0 0 1 13 1M4 13A9 9 0 0 1 13 4M7 13a6 6 0 0 1 6-6" />
        <circle cx="12" cy="12" r="1.500" fill="#fff" />
      </svg>
      <svg width="16" height="14" viewBox="0 0 16 14" fill="none" stroke="#fff" className="mr-[6px]">
        <path d="M1 5h3l4-4v12l-4-4H1zM11 4a4 4 0 0 1 0 6M13 2a7 7 0 0 1 0 10" />
      </svg>
      <span className="flex items-center justify-center w-[16px] h-[16px] bg-[#e8402c] text-white text-[12px] leading-none">中</span>
      <span className="ml-[14px] w-[15px] h-[15px] bg-[#cfe0e0] flex items-center justify-center">
        <span className="w-[8px] h-[8px] rounded-full bg-[#e00] border border-white" />
      </span>
      <div className="flex flex-col items-center w-[80px] ml-[7px] text-[12px] leading-[19px]">
        <span>8:39</span>
        <span>2017/9/22</span>
      </div>
      <div className="relative w-[16px] h-[14px] ml-[7px] mr-[27px] bg-white">
        <span className="absolute right-[-8px] bottom-[-9px] flex items-center justify-center w-[16px] h-[16px] rounded-full bg-[#444] border border-[#777] text-[10px] font-bold">1</span>
      </div>
    </div>
  </div>
);

const TopRightBar = () => (
  <div className="flex h-[29px] shrink-0 justify-end">
    <div className="flex items-center w-[220px] pl-[9px] text-[12px] text-[#111] border-l border-dotted border-[#bbb]">
      <svg width="13" height="16" viewBox="0 0 13 16">
        <rect width="13" height="16" rx="2" fill="#6cb4e6" />
        <circle cx="6.500" cy="6" r="2.400" fill="#fff" />
        <path d="M2 13c0-3 9-3 9 0z" fill="#fff" />
      </svg>
      <span className="ml-[7px]">登录</span>
      <span className="ml-[3px]">
        <Arrow />
      </span>
      <span className="ml-[7px]">造价豆:0</span>
      <svg width="12" height="16" viewBox="0 0 12 16" className="ml-[7px]">
        <path d="M6 0c3 0 4 3 4 6l2 6H0l2-6c0-3 1-6 4-6zM4 13h4l-2 3z" fill="#6fb2f2" />
      </svg>
      <svg width="14" height="16" viewBox="0 0 14 16" className="ml-[11px]" fill="none" stroke="#6cb4e6">
        <path d="M.5.500h13v11H7l-3 3v-3H.5z" />
        <path d="M4 6h1M7 6h1M10 6h1" />
      </svg>
      <span className="ml-[3px]">我要建议</span>
    </div>
  </div>
);

const TitleBar = () => (
  <div className="relative flex items-center h-[23px] shrink-0 pl-[2px] text-[12px] text-[#111] whitespace-nowrap">
    <AppLogo size={15} />
    <span className="ml-[6px] tracking-[0.2px] -mt-[2px]">
      广联达BIM土建算量软件 GCL2013 - [E:\广联达BIM建设工程造价管理整体解决方案及数据文件\近期审核工程\植物资源与生物技术研究平台项目\植物园 钢筋及图形 ( 结算 ) \系统楼\植物系统研究实验楼1325版.GCL10]
    </span>
    <div className="absolute right-0 top-0 flex items-center h-[20px] text-[#111]">
      <span className="w-[12px] h-px bg-[#333] mr-[33px]" />
      <svg width="11" height="12" viewBox="0 0 11 12" fill="none" stroke="#333" className="mr-[35px]">
        <rect x="1.500" y="3.500" width="6" height="8" />
        <path d="M3.500 3.500v-3h6v8h-2" />
      </svg>
      <span className="mr-[19px]">
        <Cross color="#333" size={12} />
      </span>
    </div>
  </div>
);

const GreenBadge = () => (
  <div className="absolute left-[1248px] top-0 z-10 flex items-end justify-center w-[44px] h-[20px] pb-[4px] rounded-b-[22px] bg-[#3ec45d] border-2 border-t-0 border-[#dcdcdc] shadow-[0_2px_3px_rgba(0,0,0,0.45)] text-white text-[11px] leading-none">
    23
  </div>
);

export default function App() {
  return (
    <div className="relative flex flex-col w-[1920px] h-[1080px] overflow-hidden bg-white font-['Noto_Sans_CJK_SC','Liberation_Sans',sans-serif]">
      <TitleBar />
      <GreenBadge />
      <TopRightBar />
      <MenuBar />
      <ToolBar />
      <div className="flex flex-1 min-h-0 bg-[#f0f0f0]">
        <NavPanel />
        <ComponentPanel />
        <main className="flex flex-col flex-1 min-w-0 ml-[7px] mr-[3px] h-full">
          <MainToolbar />
          <BillGrid />
          <QueryTabs />
          <QueryPane />
          <FilterBar />
          <BottomStrip />
        </main>
      </div>
      <StatusBar />
      <TaskBar />
      <PropertyDialog />
      <ImeBar />
      <Watermark />
      <RedMarks />
    </div>
  );
}
